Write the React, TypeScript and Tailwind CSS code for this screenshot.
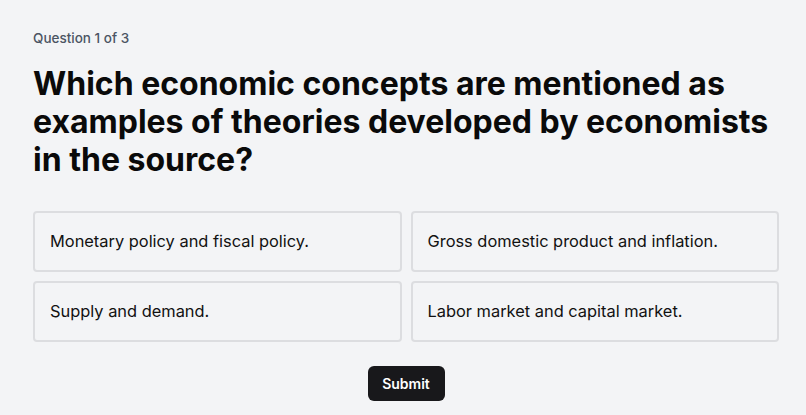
const options = [
  'Monetary policy and fiscal policy.',
  'Gross domestic product and inflation.',
  'Supply and demand.',
  'Labor market and capital market.',
];

export default function App() {
  return (
    <div className="min-h-screen bg-[#f3f4f6] font-['Inter',sans-serif] text-[#0a0a0a]">
      <div className="pl-[33px] pr-[27px] pt-[28px]">
        <p className="text-[13.5px] font-medium leading-5 text-[#4b5563]">Question 1 of 3</p>
        <h1 className="mt-[17px] text-[32px] font-bold leading-[38px]">
          Which economic concepts are mentioned as examples of theories developed by economists in the source?
        </h1>
        <div className="mt-8 grid grid-cols-2 gap-x-[9px] gap-y-[9px]">
          {options.map((o) => (
            <button
              key={o}
              className="h-[61px] rounded border-2 border-[#dcdde0] bg-[#f3f4f6] px-[15px] text-left text-[16.4px] text-[#111]"
            >
              {o}
            </button>
          ))}
        </div>
        <div className="mt-6 flex justify-center">
          <button className="h-[35px] w-[77px] rounded-md bg-[#18181b] text-[14px] font-semibold text-white">
            Submit
          </button>
        </div>
      </div>
    </div>
  );
}
